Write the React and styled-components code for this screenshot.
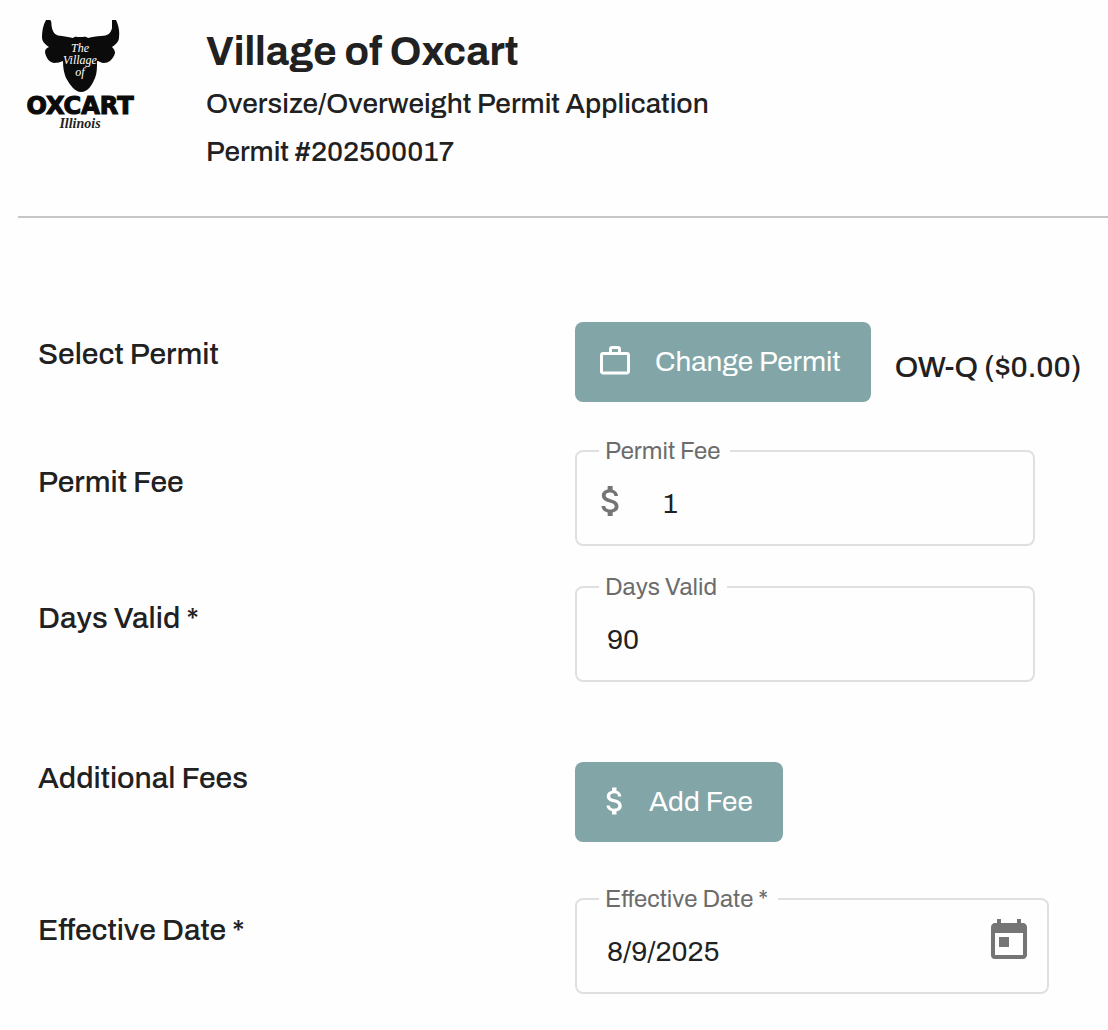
import React, { useState } from 'react';
import styled, { createGlobalStyle } from 'styled-components';
import { MdAttachMoney, MdToday, MdWorkOutline } from 'react-icons/md';

const GlobalStyle = createGlobalStyle`
    * {
        box-sizing: border-box;
    }

    body {
        margin: 0;
        background: #fefefe;
        color: #212121;
        font-family: 'Archivo', 'Liberation Sans', Arial, sans-serif;
    }
`;

const Page = styled.main`
    padding: 16px 0 32px 18px;
`;

const Header = styled.header`
    display: flex;
    gap: 66px;
    padding: 0 4px 46px;
    border-bottom: 2px solid #c6c6c6;
`;

const Logo = styled.svg`
    width: 118px;
    height: 116px;
    flex: none;
`;

const Heading = styled.div`
    padding-top: 12px;
`;

const Title = styled.h1`
    margin: 0 0 10px;
    font-size: 40px;
    line-height: 48px;
`;

const Subtitle = styled.p`
    margin: 0 0 12px;
    font-size: 28px;
    font-weight: 500;
    line-height: 36px;

    &:last-child {
        margin: 0;
    }
`;

const Form = styled.form`
    padding: 104px 0 0 20px;
`;

const Row = styled.div`
    display: grid;
    grid-template-columns: 1fr 1fr;
    column-gap: 4px;
    align-items: start;
    margin-bottom: ${props => props.space || 0}px;
`;

const RowLabel = styled.div`
    padding-top: 14px;
    font-size: 30px;
    font-weight: 500;
    line-height: 36px;
`;

const Control = styled.div`
    display: flex;
    align-items: center;
    gap: 24px;
    padding-top: ${props => (props.lowered ? 16 : 0)}px;
`;

const Button = styled.button`
    display: flex;
    align-items: center;
    gap: ${props => props.iconGap}px;
    height: 80px;
    padding: 0 30px 2px 22px;
    border: 0;
    border-radius: 8px;
    background: #82a6a7;
    color: #fff;
    font: inherit;
    font-size: 28px;
    white-space: nowrap;
    cursor: pointer;
`;

const PermitName = styled.span`
    padding-top: 10px;
    font-size: 30px;
    font-weight: 500;
    line-height: 36px;
    white-space: nowrap;
`;

const Outline = styled.fieldset`
    display: flex;
    width: 100%;
    max-width: ${props => (props.wide ? 474 : 460)}px;
    height: 107px;
    margin: -11px 0 0;
    padding: 0 14px;
    border: 2px solid #e0e0e0;
    border-radius: 8px;
    color: #757575;

    &:focus-within {
        border-color: #82a6a7;
    }
`;

const Legend = styled.legend`
    margin-left: 8px;
    padding: 0 10px 0 6px;
    font-size: 24px;
    line-height: 24px;
    color: #6c6c6c;
`;

const FieldBody = styled.div`
    display: flex;
    flex: 1;
    align-items: center;
    height: 76px;
    min-width: 0;
`;

const Input = styled.input`
    flex: 1;
    min-width: 0;
    height: 36px;
    margin: 4px 0 0;
    padding: 0 0 0 ${props => (props.indent ? 32 : 16)}px;
    border: 0;
    outline: 0;
    background: transparent;
    color: #212121;
    font: inherit;
    font-size: 28px;
`;

const PickerButton = styled.button`
    display: flex;
    margin: 0 0 16px;
    padding: 0;
    border: 0;
    background: transparent;
    color: #757575;
    cursor: pointer;
`;

const OxcartLogo = () => (
    <Logo viewBox="0 0 118 116" role="img" aria-label="Village of Oxcart, Illinois">
        <path
            fill="#0b0b0c"
            d="M24 4 L28 4 C30 5 29 8 30 12 C31 17 34 20 40 20 C44 21 48 21 51 22 C53 20 54 21 58 21
            C62 21 64 20 66 22 C70 21 74 20 79 20 C86 20 89 17 90 12 L90 4 L94 4
            C96 8 98 15 97 21 C97 26 94 28 90 31 C92 33 93 35 93 37 C91 44 86 47 82 47
            C79 47 77 45 75 45 C75 52 75 57 73 62 C70 69 66 76 59 76 C53 76 48 69 44 62
            C42 57 41 52 41 45 C38 46 36 47 32 47 C27 46 24 42 23 36 C23 33 25 32 27 31
            C23 28 20 26 20 21 C20 15 21 9 24 4 Z"
        />
        <g
            fill="#fff"
            fontFamily="'Liberation Serif', serif"
            fontStyle="italic"
            fontSize="12"
            textAnchor="middle"
        >
            <text x="58" y="36">The</text>
            <text x="58" y="48">Village</text>
            <text x="58" y="60">of</text>
        </g>
        <text
            x="58"
            y="98"
            fill="#0b0b0c"
            stroke="#0b0b0c"
            strokeWidth="1.2"
            fontFamily="'DejaVu Sans', sans-serif"
            fontWeight="bold"
            fontSize="24"
            textAnchor="middle"
        >
            OXCART
        </text>
        <text
            x="58"
            y="112"
            fill="#222"
            fontFamily="'Liberation Serif', serif"
            fontStyle="italic"
            fontWeight="bold"
            fontSize="14"
            textAnchor="middle"
        >
            Illinois
        </text>
    </Logo>
);

const Field = ({ id, label, initial, startIcon, endIcon, wide }) => {
    const [value, setValue] = useState(initial);

    return (
        <Outline wide={wide}>
            <Legend>
                <label htmlFor={id}>{label}</label>
            </Legend>
            <FieldBody>
                {startIcon}
                <Input
                    id={id}
                    type="text"
                    indent={Boolean(startIcon)}
                    value={value}
                    onChange={e => setValue(e.target.value)}
                />
                {endIcon}
            </FieldBody>
        </Outline>
    );
};

const App = () => (
    <>
        <GlobalStyle />
        <Page>
            <Header>
                <OxcartLogo />
                <Heading>
                    <Title>Village of Oxcart</Title>
                    <Subtitle>Oversize/Overweight Permit Application</Subtitle>
                    <Subtitle>Permit #202500017</Subtitle>
                </Heading>
            </Header>
            <Form onSubmit={e => e.preventDefault()}>
                <Row space={48}>
                    <RowLabel>Select Permit</RowLabel>
                    <Control>
                        <Button type="button" iconGap={22}>
                            <MdWorkOutline size={36} />
                            Change Permit
                        </Button>
                        <PermitName>OW-Q ($0.00)</PermitName>
                    </Control>
                </Row>
                <Row space={40}>
                    <RowLabel as="label" htmlFor="permit-fee">Permit Fee</RowLabel>
                    <Field
                        id="permit-fee"
                        label="Permit Fee"
                        initial="1"
                        startIcon={<MdAttachMoney size={40} />}
                    />
                </Row>
                <Row space={64}>
                    <RowLabel as="label" htmlFor="days-valid">Days Valid *</RowLabel>
                    <Field id="days-valid" label="Days Valid" initial="90" />
                </Row>
                <Row space={56}>
                    <RowLabel>Additional Fees</RowLabel>
                    <Control lowered>
                        <Button type="button" iconGap={16}>
                            <MdAttachMoney size={36} />
                            Add Fee
                        </Button>
                    </Control>
                </Row>
                <Row>
                    <RowLabel as="label" htmlFor="effective-date">Effective Date *</RowLabel>
                    <Field
                        id="effective-date"
                        label="Effective Date *"
                        initial="8/9/2025"
                        wide
                        endIcon={
                            <PickerButton type="button" aria-label="Open calendar">
                                <MdToday size={48} />
                            </PickerButton>
                        }
                    />
                </Row>
            </Form>
        </Page>
    </>
);

export default App;
